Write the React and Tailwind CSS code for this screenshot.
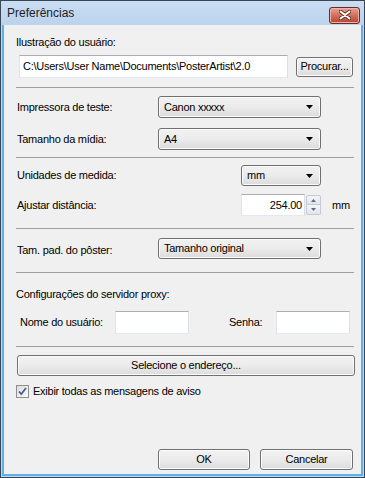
import React from "react";

const font = { fontFamily: '"Liberation Sans", Arial, sans-serif' };

function Arrow() {
  return (
    <svg width="7" height="4" viewBox="0 0 7 4" className="shrink-0">
      <path d="M0 0h7L3.5 4z" fill="#000" />
    </svg>
  );
}

function Select({ value, className }) {
  return (
    <div
      className={
        "flex items-center justify-between rounded-[3px] border border-[#707070] bg-gradient-to-b from-[#f2f2f2] via-[#ebebeb] to-[#dcdcdc] pl-[5px] pr-[7px] shadow-[inset_0_0_0_1px_#fbfbfb] " +
        className
      }
    >
      <span>{value}</span>
      <Arrow />
    </div>
  );
}

function Button({ children, className }) {
  return (
    <div
      className={
        "flex items-center justify-center rounded-[3px] border border-[#707070] bg-gradient-to-b from-[#f2f2f2] via-[#ebebeb] to-[#dcdcdc] shadow-[inset_0_0_0_1px_#fcfcfc] " +
        className
      }
    >
      {children}
    </div>
  );
}

function TextBox({ className, children }) {
  return (
    <div
      className={
        "flex items-center border border-[#abadb3] border-l-[#e2e3ea] border-r-[#dbdfe6] border-b-[#e3e9ef] bg-white " +
        className
      }
    >
      {children}
    </div>
  );
}

function Sep() {
  return <div className="ml-[12px] h-px w-[338px] bg-[#a0a0a0]" />;
}

export default function App() {
  return (
    <div
      className="w-[365px] h-[478px] border border-[#3a4656] bg-[#c1d7ef] flex flex-col text-[11px] tracking-[-0.25px] text-black overflow-hidden"
      style={font}
    >
      {/* title bar */}
      <div className="h-[24px] shrink-0 flex items-center justify-between bg-gradient-to-b from-[#c9ddf3] to-[#bcd3ed] pl-[6px] pr-[4px]">
        <span className="text-[12px] tracking-normal text-[#1e1e1e]">Preferências</span>
        <div className="mt-[4px] w-[31px] h-[17px] rounded-[3px] border border-[#6b2a22] bg-gradient-to-b from-[#e6a395] via-[#d0705c] to-[#b8412d] flex items-center justify-center shadow-[inset_0_0_0_1px_#eeb3a6]">
          <svg width="12" height="10" viewBox="0 0 12 10">
            <path
              d="M1.5 1.5l9 7M10.5 1.5l-9 7"
              stroke="#5a2a22"
              strokeWidth="3.6"
              strokeLinecap="round"
            />
            <path
              d="M1.5 1.5l9 7M10.5 1.5l-9 7"
              stroke="#fff"
              strokeWidth="2"
              strokeLinecap="round"
            />
          </svg>
        </div>
      </div>

      {/* body */}
      <div className="flex-1 mx-[1px] mb-[1px] border-l-2 border-r-2 border-b-2 border-[#5fb0e6] bg-[#f0f0f0] flex flex-col pt-[11px]">
        <div className="ml-[12px] h-[13px] leading-[13px]">Ilustração do usuário:</div>

        <div className="mt-[6px] ml-[15px] flex items-center">
          <TextBox className="w-[269px] h-[23px] pl-[3px]">
            C:\Users\User Name\Documents\PosterArtist\2.0
          </TextBox>
          <Button className="ml-[8px] w-[57px] h-[20px]">Procurar...</Button>
        </div>

        <div className="mt-[9px]">
          <Sep />
        </div>

        <div className="mt-[8px] flex items-center h-[22px]">
          <span className="ml-[13px] w-[141px]">Impressora de teste:</span>
          <Select value="Canon xxxxx" className="w-[163px] h-[22px]" />
        </div>
        <div className="mt-[10px] flex items-center h-[22px]">
          <span className="ml-[13px] w-[141px]">Tamanho da mídia:</span>
          <Select value="A4" className="w-[163px] h-[22px]" />
        </div>

        <div className="mt-[7px]">
          <Sep />
        </div>

        <div className="mt-[7px] flex items-center h-[21px]">
          <span className="ml-[13px] w-[224px]">Unidades de medida:</span>
          <Select value="mm" className="w-[80px] h-[21px]" />
        </div>

        <div className="mt-[8px] flex items-center h-[22px]">
          <span className="ml-[13px] w-[224px]">Ajustar distância:</span>
          <TextBox className="w-[64px] h-[22px] justify-end pr-[2px]">254.00</TextBox>
          <div className="ml-px flex flex-col h-[20px] w-[15px] gap-0">
            <div className="h-[10px] flex items-center justify-center rounded-t-[2px] border border-[#c3cad4] bg-gradient-to-b from-[#f4f6f8] to-[#e1e6ec]">
              <svg width="5" height="3" viewBox="0 0 5 3">
                <path d="M0 3h5L2.5 0z" fill="#5a6a8a" />
              </svg>
            </div>
            <div className="h-[10px] flex items-center justify-center rounded-b-[2px] border border-t-0 border-[#c3cad4] bg-gradient-to-b from-[#f4f6f8] to-[#e1e6ec]">
              <svg width="5" height="3" viewBox="0 0 5 3">
                <path d="M0 0h5L2.5 3z" fill="#5a6a8a" />
              </svg>
            </div>
          </div>
          <span className="ml-[11px]">mm</span>
        </div>

        <div className="mt-[12px]">
          <Sep />
        </div>

        <div className="mt-[9px] flex items-center h-[21px]">
          <span className="ml-[13px] w-[141px] mt-[4px]">Tam. pad. do pôster:</span>
          <Select value="Tamanho original" className="w-[163px] h-[21px]" />
        </div>

        <div className="mt-[13px]">
          <Sep />
        </div>

        <div className="mt-[15px] ml-[12px] h-[13px] leading-[13px]">
          Configurações do servidor proxy:
        </div>

        <div className="mt-[10px] flex items-center h-[23px]">
          <span className="ml-[16px] w-[95px]">Nome do usuário:</span>
          <TextBox className="w-[74px] h-[23px]" />
          <span className="ml-[40px] w-[47px]">Senha:</span>
          <TextBox className="w-[74px] h-[23px]" />
        </div>

        <div className="mt-[12px]">
          <Sep />
        </div>

        <Button className="mt-[8px] ml-[13px] w-[338px] h-[21px]">Selecione o endereço...</Button>

        <div className="mt-[9px] ml-[12px] flex items-center h-[13px]">
          <div className="w-[13px] h-[13px] border border-[#8e8f8f] bg-gradient-to-br from-[#dcdcdc] to-[#fbfbfb] flex items-center justify-center">
            <svg width="9" height="9" viewBox="0 0 9 9">
              <path d="M1 4.5l2.3 2.6L8 1" fill="none" stroke="#4a5f97" strokeWidth="1.8" />
            </svg>
          </div>
          <span className="ml-[4px]">Exibir todas as mensagens de aviso</span>
        </div>

        <div className="mt-[51px] flex items-center h-[21px]">
          <Button className="ml-[154px] w-[92px] h-[21px] border-[#3c7fb1] from-[#eaf6fd] via-[#d9f0fc] to-[#bee6fd] shadow-[inset_0_0_0_1px_#c6e8fb]">
            OK
          </Button>
          <Button className="ml-[10px] w-[93px] h-[21px]">Cancelar</Button>
        </div>
      </div>
    </div>
  );
}
